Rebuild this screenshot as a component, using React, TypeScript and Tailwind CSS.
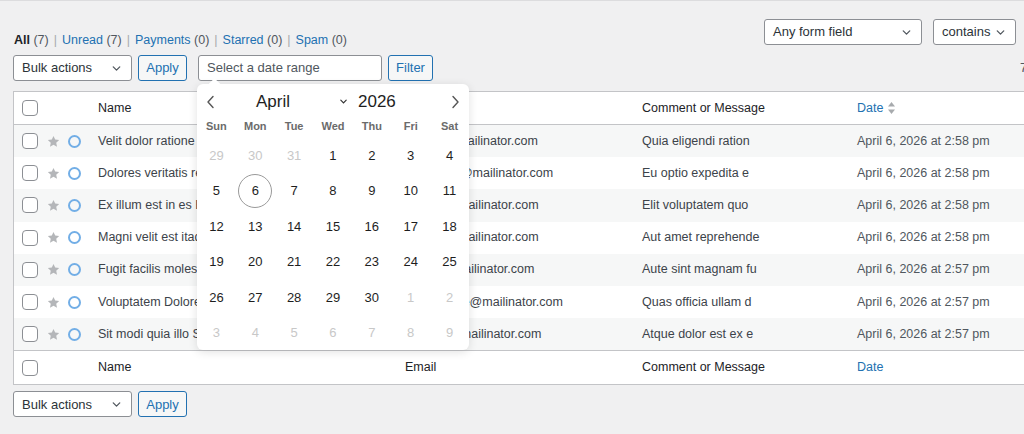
import React from 'react';

const FONT = { fontFamily: '"Liberation Sans", Arial, sans-serif' };

const Chevron = ({ className = 'w-3 h-3' }: { className?: string }) => (
  <svg className={className} viewBox="0 0 16 16" fill="none" stroke="currentColor" strokeWidth="1.6" strokeLinecap="round" strokeLinejoin="round">
    <path d="M4 6l4 4 4-4" />
  </svg>
);

const Star = () => (
  <svg className="w-[13px] h-[13px] text-[#b4b6b9]" viewBox="0 0 20 20" fill="currentColor">
    <path d="M10 1.5l2.6 5.6 6.1.7-4.5 4.2 1.2 6-5.4-3.1-5.4 3.1 1.2-6L1.3 7.8l6.1-.7z" />
  </svg>
);

const Box = () => <span className="block w-4 h-4 rounded-[4px] border border-[#8c8f94] bg-white" />;

const SortIcon = () => (
  <svg className="w-[9px] h-[14px] text-[#a7aaad]" viewBox="0 0 9 14" fill="currentColor">
    <path d="M4.5 1L8 5.5H1z" />
    <path d="M4.5 13L1 8.5h7z" />
  </svg>
);

const Select = ({ label, width }: { label: string; width: string }) => (
  <div className={`${width} h-[26px] flex items-center justify-between pl-[8px] pr-[8px] bg-white border border-[#8c8f94] rounded-[3px] text-[13px] text-[#2c3338]`}>
    <span>{label}</span>
    <Chevron className="w-[13px] h-[13px] text-[#50575e]" />
  </div>
);

const Button = ({ label, width }: { label: string; width: string }) => (
  <div className={`${width} h-[26px] flex items-center justify-center bg-[#f6f7f7] border border-[#2271b1] rounded-[3px] text-[13px] text-[#2271b1]`}>
    {label}
  </div>
);

const rows = [
  ['Velit dolor ratione l', 'kyhacu@mailinator.com', 'Quia eligendi ration', 'April 6, 2026 at 2:58 pm'],
  ['Dolores veritatis re', 'dynaqepo@mailinator.com', 'Eu optio expedita e', 'April 6, 2026 at 2:58 pm'],
  ['Ex illum est in es E', 'zakedu@mailinator.com', 'Elit voluptatem quo', 'April 6, 2026 at 2:58 pm'],
  ['Magni velit est itaq', 'tyrocaz@mailinator.com', 'Aut amet reprehende', 'April 6, 2026 at 2:58 pm'],
  ['Fugit facilis moles', 'lyseqo@mailinator.com', 'Aute sint magnam fu', 'April 6, 2026 at 2:57 pm'],
  ['Voluptatem Dolore', 'rixagyfodue@mailinator.com', 'Quas officia ullam d', 'April 6, 2026 at 2:57 pm'],
  ['Sit modi quia illo Si', 'nuwoxa@mailinator.com', 'Atque dolor est ex e', 'April 6, 2026 at 2:57 pm'],
];

const cols = 'grid grid-cols-[84px_307px_237px_215px_1fr] items-center';

const weeks: [number, boolean][][] = [
  [[29, false], [30, false], [31, false], [1, true], [2, true], [3, true], [4, true]],
  [[5, true], [6, true], [7, true], [8, true], [9, true], [10, true], [11, true]],
  [[12, true], [13, true], [14, true], [15, true], [16, true], [17, true], [18, true]],
  [[19, true], [20, true], [21, true], [22, true], [23, true], [24, true], [25, true]],
  [[26, true], [27, true], [28, true], [29, true], [30, true], [1, false], [2, false]],
  [[3, false], [4, false], [5, false], [6, false], [7, false], [8, false], [9, false]],
];

const Calendar = () => (
  <div className="absolute left-[184px] top-[29px] w-[272px] bg-white rounded-[6px] shadow-[0_2px_10px_rgba(0,0,0,0.12)] z-10">
    <div className="absolute -top-[4px] left-[13px] w-[9px] h-[9px] bg-white rotate-45" />
    <div className="relative h-[34px] flex items-center pt-[1px] text-[#1e1e1e]">
      <svg className="absolute left-[9px] w-[10px] h-[14px] text-[#555]" viewBox="0 0 10 14" fill="none" stroke="currentColor" strokeWidth="1.4" strokeLinecap="round" strokeLinejoin="round">
        <path d="M7 1.5L2 7l5 5.5" />
      </svg>
      <span className="absolute left-[59px] text-[17px]">April</span>
      <svg className="absolute left-[142px] w-[9px] h-[9px] text-[#333]" viewBox="0 0 10 10" fill="none" stroke="currentColor" strokeWidth="1.3" strokeLinecap="round">
        <path d="M2 3.5l3 3 3-3" />
      </svg>
      <span className="absolute left-[161px] text-[17px]">2026</span>
      <svg className="absolute left-[253px] w-[10px] h-[14px] text-[#555]" viewBox="0 0 10 14" fill="none" stroke="currentColor" strokeWidth="1.4" strokeLinecap="round" strokeLinejoin="round">
        <path d="M3 1.5L8 7l-5 5.5" />
      </svg>
    </div>
    <div className="grid grid-cols-7 h-[14px] items-center text-[11px] font-bold text-[#6b6b6b]">
      {['Sun', 'Mon', 'Tue', 'Wed', 'Thu', 'Fri', 'Sat'].map((d) => (
        <span key={d} className="text-center">{d}</span>
      ))}
    </div>
    <div className="mt-[6px]">
      {weeks.map((w, i) => (
        <div key={i} className="grid grid-cols-7 h-[35.4px] items-center">
          {w.map(([d, cur], j) => (
            <div key={j} className="flex justify-center">
              <span
                className={`w-[34px] h-[34px] flex items-center justify-center rounded-full text-[13px] ${
                  cur ? 'text-[#1e1e1e]' : 'text-[#c8c8c8]'
                } ${i === 1 && j === 1 ? 'border border-[#9a9a9a]' : ''}`}
              >
                {d}
              </span>
            </div>
          ))}
        </div>
      ))}
    </div>
  </div>
);

export default function App() {
  return (
    <div style={FONT} className="w-[1024px] h-[434px] overflow-hidden bg-[#f0f0f1] border-t border-[#dcdcde]">
      <div className="w-[1070px] pl-[13px]">
        <div className="flex items-start h-[54px]">
          <div className="pt-[30px] pl-[1px] text-[12.5px] text-[#50575e] flex gap-[5px]">
            <span><span className="font-bold text-[#1d2327]">All</span> (7)</span>
            <span className="text-[#a7aaad]">|</span>
            <span><span className="text-[#2271b1]">Unread</span> (7)</span>
            <span className="text-[#a7aaad]">|</span>
            <span><span className="text-[#2271b1]">Payments</span> (0)</span>
            <span className="text-[#a7aaad]">|</span>
            <span><span className="text-[#2271b1]">Starred</span> (0)</span>
            <span className="text-[#a7aaad]">|</span>
            <span><span className="text-[#2271b1]">Spam</span> (0)</span>
          </div>
          <div className="ml-[417px] pt-[18px] flex gap-[11px]">
            <Select label="Any form field" width="w-[158px]" />
            <Select label="contains" width="w-[83px]" />
          </div>
        </div>
        <div className="relative flex items-center gap-[6px] h-[26px]">
          <Select label="Bulk actions" width="w-[119px]" />
          <Button label="Apply" width="w-[49px]" />
          <div className="ml-[5px] w-[184px] h-[26px] flex items-center pl-[8px] bg-white border border-[#8c8f94] rounded-[3px] text-[13px] text-[#50575e]">
            Select a date range
          </div>
          <Button label="Filter" width="w-[45px]" />
          <span className="ml-auto mr-[8px] text-[13px] text-[#50575e]">7 items</span>
          <Calendar />
        </div>
        <div className="mt-[10px] bg-white border border-[#c3c4c7] text-[12.5px] text-[#2c3338]">
          <div className={`${cols} h-[33px] border-b border-[#c3c4c7] text-[#1d2327]`}>
            <div className="pl-[8px]"><Box /></div>
            <span>Name</span>
            <span>Email</span>
            <span>Comment or Message</span>
            <span className="flex items-center gap-[4px] text-[#2271b1]">Date <SortIcon /></span>
          </div>
          {rows.map((r, i) => (
            <div key={i} className={`${cols} h-[32.2px] ${i % 2 === 0 ? 'bg-[#f6f7f7]' : 'bg-white'}`}>
              <div className="pl-[8px] flex items-center">
                <Box />
                <span className="ml-[9px]"><Star /></span>
                <span className="ml-[8px] block w-[13px] h-[13px] rounded-full border-2 border-[#72aee6]" />
              </div>
              <span className="text-[#3c434a]">{r[0]}</span>
              <span className="text-[#3c434a]">{r[1]}</span>
              <span className="text-[#3c434a]">{r[2]}</span>
              <span className="text-[#50575e]">{r[3]}</span>
            </div>
          ))}
          <div className={`${cols} h-[34px] border-t border-[#c3c4c7] text-[#1d2327]`}>
            <div className="pl-[8px]"><Box /></div>
            <span>Name</span>
            <span>Email</span>
            <span>Comment or Message</span>
            <span className="text-[#2271b1]">Date</span>
          </div>
        </div>
        <div className="mt-[6px] flex items-center gap-[6px]">
          <Select label="Bulk actions" width="w-[119px]" />
          <Button label="Apply" width="w-[49px]" />
        </div>
      </div>
    </div>
  );
}
